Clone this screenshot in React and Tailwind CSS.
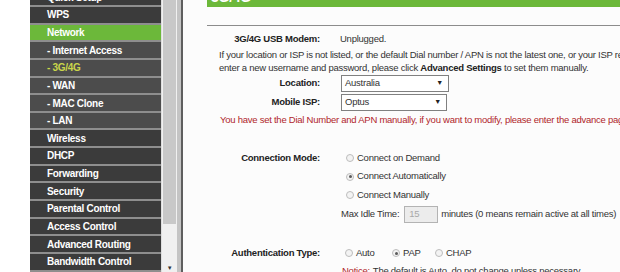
import React from "react";

const MENU = [
  { label: "Quick Setup", kind: "main" },
  { label: "WPS", kind: "main" },
  { label: "Network", kind: "active" },
  { label: "- Internet Access", kind: "sub" },
  { label: "- 3G/4G", kind: "subActive" },
  { label: "- WAN", kind: "sub" },
  { label: "- MAC Clone", kind: "sub" },
  { label: "- LAN", kind: "sub" },
  { label: "Wireless", kind: "main" },
  { label: "DHCP", kind: "main" },
  { label: "Forwarding", kind: "main" },
  { label: "Security", kind: "main" },
  { label: "Parental Control", kind: "main" },
  { label: "Access Control", kind: "main" },
  { label: "Advanced Routing", kind: "main" },
  { label: "Bandwidth Control", kind: "main" },
  { label: "IP & MAC Binding", kind: "main" },
];

const rowBg = {
  main: "bg-[#3b3b3b] text-white",
  active: "bg-[#6cb83a] text-white",
  sub: "bg-[#4c4c4c] text-white",
  subActive: "bg-[#4c4c4c] text-[#c9d64a]",
};

const Radio = ({ checked }) => (
  <span className="inline-flex w-[8px] h-[8px] rounded-full border border-[#bdbdbd] bg-[#f3f3f3] items-center justify-center shrink-0">
    {checked && <span className="w-[3px] h-[3px] rounded-full bg-[#5a5a5a]" />}
  </span>
);

const Select = ({ value, width }) => (
  <div
    className="h-[17px] border border-[#808080] bg-white flex items-center justify-between pl-[3px] pr-[5px]"
    style={{ width }}
  >
    <span>{value}</span>
    <span className="text-[7px] text-[#222]">▼</span>
  </div>
);

const Label = ({ children }) => (
  <div className="w-[113px] shrink-0 text-right font-bold text-[#222]">{children}</div>
);

export default function App() {
  return (
    <div className="w-[620px] h-[272px] overflow-hidden bg-white flex font-['Liberation_Sans',Arial,sans-serif] text-[9.5px] tracking-[-0.25px] text-[#333]">
      <div className="w-[30px] shrink-0 bg-white" />

      {/* menu */}
      <div className="w-[131px] shrink-0 bg-[#3b3b3b]">
        <div className="-mt-[12.65px]">
          {MENU.map((m) => (
            <div
              key={m.label}
              className={`h-[17.65px] border-t-2 border-[#8e8e8e] flex items-center pl-[17px] font-bold text-[10px] tracking-[-0.3px] whitespace-nowrap ${rowBg[m.kind]}`}
            >
              {m.label}
            </div>
          ))}
        </div>
      </div>

      {/* scrollbar */}
      <div className="w-[16px] shrink-0 bg-[#f0f0f0] border-l border-[#dedede] flex flex-col">
        <div className="mx-[1px] h-[224px] bg-[#c8c8c8]" />
        <div className="flex-1" />
        <div className="h-[8px] flex justify-center text-[6px] leading-[8px] text-[#333]">▼</div>
      </div>
      <div className="w-[4px] shrink-0 bg-[#c4c4c4]" />
      <div className="w-[2px] shrink-0 bg-[#5e5e5e]" />

      {/* content */}
      <div className="flex-1 bg-[#fcfcfc] pl-[24px] whitespace-nowrap">
        <div className="h-[24px] -mt-[17px] bg-[#6cb83a] flex items-end pl-[4px]">
          <span className="text-white font-bold text-[14px] leading-[20px]">3G/4G</span>
        </div>
        <div className="mt-[18px] h-px bg-[#8c8c8c]" />

        <div className="mt-[5px] h-[16px] flex items-center">
          <Label>3G/4G USB Modem:</Label>
          <div className="ml-[20px]">Unplugged.</div>
        </div>

        <div className="pl-[12px] leading-[13px] py-[0.5px]">
          If your location or ISP is not listed, or the default Dial number / APN is not the latest one, or your ISP requires you to
          <br />
          enter a new username and password, please click <b className="text-[#222]">Advanced Settings</b> to set them manually.
        </div>

        <div className="h-[19px] flex items-center">
          <Label>Location:</Label>
          <div className="ml-[21px]">
            <Select value="Australia" width="108px" />
          </div>
        </div>
        <div className="h-[19px] flex items-center">
          <Label>Mobile ISP:</Label>
          <div className="ml-[21px]">
            <Select value="Optus" width="106px" />
          </div>
        </div>

        <div className="h-[16px] flex items-center pl-[13px] text-[#b0262b]">
          You have set the Dial Number and APN manually, if you want to modify, please enter the advance page to set them.
        </div>

        <div className="mt-[21px] h-[18px] flex items-center">
          <Label>Connection Mode:</Label>
          <div className="ml-[26px] flex items-center gap-[3px]">
            <Radio /> Connect on Demand
          </div>
        </div>
        <div className="h-[19px] flex items-center pl-[139px] gap-[3px]">
          <Radio checked /> Connect Automatically
        </div>
        <div className="h-[18px] flex items-center pl-[139px] gap-[3px]">
          <Radio /> Connect Manually
        </div>
        <div className="h-[20px] flex items-center pl-[134px]">
          <span>Max Idle Time:</span>
          <div className="ml-[5px] w-[34px] h-[17px] border border-[#b3b3b3] bg-[#ececec] flex items-center pl-[4px] text-[#a8a8a8]">
            15
          </div>
          <span className="ml-[3px]">minutes (0 means remain active at all times)</span>
        </div>

        <div className="mt-[20px] h-[18px] flex items-center">
          <Label>Authentication Type:</Label>
          <div className="ml-[25px] flex items-center">
            <div className="w-[47px] flex items-center gap-[3px]">
              <Radio /> Auto
            </div>
            <div className="w-[43px] flex items-center gap-[3px]">
              <Radio checked /> PAP
            </div>
            <div className="flex items-center gap-[3px]">
              <Radio /> CHAP
            </div>
          </div>
        </div>
        <div className="h-[18px] flex items-center pl-[135px]">
          <span className="text-[#b0262b]">Notice:</span>
          <span className="ml-[3px]">The default is Auto, do not change unless necessary.</span>
        </div>
      </div>
    </div>
  );
}
